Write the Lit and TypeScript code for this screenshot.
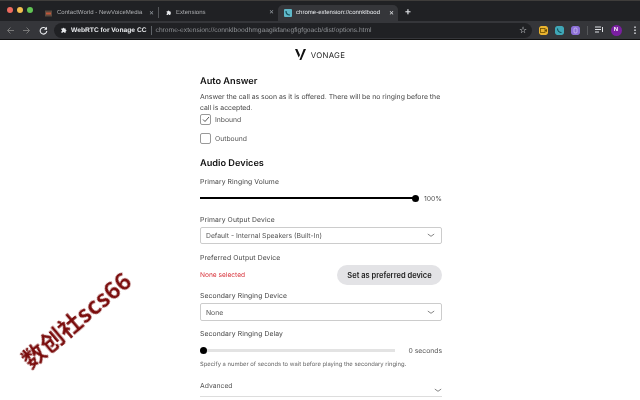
import { LitElement, html, css, svg } from "lit";
import { customElement } from "lit/decorators.js";

const puzzle = svg`<path d="M2 4h2.200a1.300 1.300 0 1 1 2.600 0H9v2.200a1.300 1.300 0 1 1 0 2.600V11H6.800a1.300 1.300 0 1 0-2.600 0H2V8.800a1.300 1.300 0 1 0 0-2.600z" fill="currentColor"/>`;
const chevron = html`<svg class="chev" viewBox="0 0 10 6" width="8" height="5"><path d="M1 1.200l4 2.800 4-2.800" fill="none" stroke="#666" stroke-width="1"/></svg>`;

@customElement("app-root")
export class AppRoot extends LitElement {
  static styles = css`
    :host { display: block; width: 640px; height: 400px; overflow: hidden; position: relative; background: #fff; font-family: Inter, "Noto Sans", sans-serif; color: #333; text-rendering: geometricPrecision; }
    * { box-sizing: border-box; }
    .chrome, .page { will-change: transform; }
    .chrome { font-family: "Liberation Sans", Arial, sans-serif; }
    .tabs { height: 21px; background: #202124; display: flex; align-items: flex-end; padding-left: 6px; border-top: 1px solid #3f3d3b; }
    .lights { display: flex; gap: 4px; width: 39px; height: 20px; align-items: center; padding-left: 1px; padding-bottom: 2px; }
    .lights i { width: 6px; height: 6px; border-radius: 50%; }
    .tab { height: 16px; display: flex; align-items: center; font-size: 6.050px; color: #a9abae; padding: 0 4px 0 6px; position: relative; white-space: nowrap; overflow: hidden; }
    .tab .label { flex: 1; overflow: hidden; min-width: 0; }
    .tab .x { font-size: 6px; color: #9aa0a6; margin-left: 3px; flex: none; }
    .t1 { width: 113px; padding-left: 0; }
    .t1 .ficon { margin-right: 5px; }
    .t2 { width: 120px; border-left: 1px solid #55575a; padding-left: 6px; height: 11px; margin-bottom: 3px; }
    .t3 { width: 120px; background: #35363a; color: #e8eaed; border-radius: 5px 5px 0 0; padding-left: 6px; }
    .ficon { width: 7px; height: 7px; margin-right: 4px; flex: none; }
    .plus { color: #dfe1e5; font-size: 10px; margin-left: 7px; height: 16px; line-height: 15px; font-weight: 600; }
    .bar { height: 19px; background: #35363a; display: flex; align-items: center; padding-left: 2px; color: #8d9094; border-bottom: 1px solid #111; }
    .nav { width: 16.500px; display: flex; justify-content: center; }
    .omni { margin-left: 2.500px; width: 478px; height: 15px; border-radius: 8px; background: #202124; display: flex; align-items: center; padding-left: 6px; font-size: 6.700px; white-space: nowrap; }
    .omni b { color: #e8eaed; font-weight: 700; margin-left: 4px; }
    .omni .sep { width: 1px; height: 9px; background: #5f6368; margin: 0 4px; }
    .omni .url { color: #8f9296; flex: 1; }
    .omni .star { color: #dfe1e5; font-size: 9px; margin-right: 5px; line-height: 1; }
    .exts { display: flex; align-items: center; margin-left: 6.500px; gap: 7px; }
    .ext { width: 9px; height: 9px; border-radius: 2px; flex: none; display: block; }
    .vsep { width: 1px; height: 9px; background: #55575a; }
    .avatar { width: 11px; height: 11px; border-radius: 50%; background: #7b1fa2; color: #fff; font-size: 6px; font-weight: 700; display: flex; align-items: center; justify-content: center; }
    .dots { color: #dfe1e5; font-size: 9px; font-weight: 700; margin-left: 2px; line-height: 1; }
    .logo { display: flex; justify-content: center; align-items: center; gap: 5px; height: 29px; font-size: 7.800px; letter-spacing: 0.300px; color: #222; }
    .col { width: 242px; margin-left: 200px; }
    h2 { margin: 0; font-size: 9.200px; font-weight: 600; color: #111; line-height: 14px; }
    .auto { margin-top: 6px; }
    .desc { font-size: 6.860px; line-height: 10.500px; margin-top: 3px; color: #444; }
    .check { display: flex; align-items: center; gap: 4px; font-size: 6.800px; color: #555; height: 11px; }
    .check .box { width: 11px; height: 11px; border: 1px solid #999; border-radius: 2px; display: flex; align-items: center; justify-content: center; }
    .c1 { margin-top: 1px; }
    .c2 { margin-top: 8px; }
    .audio { margin-top: 13px; }
    .lab { font-size: 6.800px; color: #444; line-height: 10px; letter-spacing: 0.100px; }
    .slider { display: flex; align-items: center; justify-content: space-between; height: 14px; font-size: 6.800px; color: #555; margin-top: 4px; }
    .track { height: 2px; position: relative; }
    .vol { width: 218px; background: #000; }
    .delay { width: 195px; background: #e3e3e3; height: 3px; }
    .knob { position: absolute; width: 7px; height: 7px; background: #000; border-radius: 50%; top: 50%; margin-top: -3.500px; }
    .kr { right: -1px; }
    .kl { left: 0; }
    .sel { border: 1px solid #ccc; border-radius: 2px; display: flex; align-items: center; justify-content: space-between; padding: 0 6px 0 5px; font-size: 6.800px; color: #555; margin-top: 2px; }
    .s1 { height: 17px; }
    .s2 { height: 18px; }
    .l0 { margin-top: 6px; }
    .l1 { margin-top: 10px; }
    .l2 { margin-top: 9px; }
    .l3 { margin-top: 6px; }
    .l4 { margin-top: 8px; }
    .pref { display: flex; align-items: center; justify-content: space-between; height: 20px; margin-top: 2px; }
    .none { font-size: 6.600px; color: #d9363e; }
    .btn { width: 105px; height: 20px; border-radius: 10px; background: #e3e3e6; border: 0; font: 600 7.500px Inter, sans-serif; color: #222; padding: 0; display: flex; align-items: center; justify-content: center; }
    .hint { font-size: 5.850px; color: #666; line-height: 8px; margin-top: 4px; }
    .adv { display: flex; justify-content: space-between; align-items: flex-end; height: 18px; border-bottom: 1px solid #ddd; margin-top: 10px; font-size: 6.800px; color: #555; padding-bottom: 6px; }
    .adv .chev { margin-bottom: -3px; }
    .mark { position: absolute; left: 9px; top: 308px; font-family: "Noto Sans CJK SC", sans-serif; font-size: 23.500px; font-weight: 700; color: #7a0c0c; transform: rotate(-40deg); white-space: nowrap; line-height: 1; }
  `;

  render() {
    return html`
      <div class="chrome">
      <div class="tabs">
        <div class="lights"><i style="background:#ed6a5e"></i><i style="background:#f4bf4f"></i><i style="background:#61c554"></i></div>
        <div class="tab t1"><svg class="ficon" viewBox="0 0 7 7"><rect width="7" height="6" y=".5" fill="#5a4a3f"/><rect x="1" y="2.500" width="5" height="2" fill="#c0563a"/></svg><span class="label">ContactWorld - NewVoiceMedia</span><span class="x">✕</span></div>
        <div class="tab t2"><svg class="ficon" viewBox="0 0 11 13" style="color:#e8eaed">${puzzle}</svg><span class="label">Extensions</span><span class="x">✕</span></div>
        <div class="tab t3"><svg class="ficon" style="width:8px;height:8px" viewBox="0 0 8 8"><rect width="8" height="8" rx="1" fill="#5fb8c9"/><path d="M2 2c0 2.500 1.500 4 4 4" stroke="#14505c" stroke-width="1.200" fill="none"/></svg><span class="label">chrome-extension://connklbood</span><span class="x" style="color:#e8eaed">✕</span></div>
        <div class="plus">+</div>
      </div>
      <div class="bar">
        <div class="nav"><svg width="9" height="9" viewBox="0 0 9 9"><path d="M8 4.500H1.500M4.500 1.500l-3 3 3 3" fill="none" stroke="#777" stroke-width="1"/></svg></div>
        <div class="nav"><svg width="9" height="9" viewBox="0 0 9 9"><path d="M1 4.500h6.500M4.500 1.500l3 3-3 3" fill="none" stroke="#777" stroke-width="1"/></svg></div>
        <div class="nav"><svg width="9" height="9" viewBox="0 0 9 9"><path d="M7.300 3A3.300 3.300 0 1 0 7.800 5" fill="none" stroke="#e8eaed" stroke-width="1.100"/><path d="M8 .8v3H5z" fill="#e8eaed"/></svg></div>
        <div class="omni">
          <svg width="7" height="8" viewBox="0 0 11 13" style="color:#e8eaed">${puzzle}</svg>
          <b>WebRTC for Vonage CC</b><span class="sep"></span>
          <span class="url">chrome-extension://connklboodhmgaagikfanegfigfgoacb/dist/options.html</span>
          <span class="star">☆</span>
        </div>
        <div class="exts">
          <svg class="ext" viewBox="0 0 9 9"><rect width="9" height="9" rx="2" fill="#e9b32f"/><rect x="1.500" y="2.500" width="4.500" height="4" fill="none" stroke="#6b4e00" stroke-width=".8"/><path d="M6 4l2-1v3L6 5z" fill="#6b4e00"/></svg>
          <svg class="ext" viewBox="0 0 9 9"><rect width="9" height="9" rx="2" fill="#3fa6b6"/><path d="M2.500 2.500c0 2.200 1.800 4 4 4" stroke="#0f4a55" stroke-width="1.100" fill="none"/></svg>
          <svg class="ext" viewBox="0 0 9 9"><rect width="9" height="9" rx="2" fill="#8b6fd6"/><rect x="3" y="2" width="3" height="5" rx="1" fill="none" stroke="#d9cdf7" stroke-width=".7"/></svg>
          <div class="vsep"></div>
          <svg width="9" height="8" viewBox="0 0 9 8"><path d="M0 1h6M0 3.500h6M0 6h4M7.500 1v5" stroke="#dfe1e5" stroke-width="1" fill="none"/></svg>
          <div class="avatar">N</div>
          <div class="dots">⋮</div>
        </div>
      </div>
      </div>
      <div class="page">
      <div class="logo">
        <svg width="11" height="11" viewBox="0 0 11 11"><path d="M0 0h2.300L5 6 3.700 8.500zM8.700 0H11L6.300 11H4.400z" fill="#111"/></svg>
        <span>VONAGE</span>
      </div>
      <div class="col">
        <h2 class="auto">Auto Answer</h2>
        <div class="desc">Answer the call as soon as it is offered. There will be no ringing before the call is accepted.</div>
        <div class="check c1"><span class="box"><svg width="8" height="7" viewBox="0 0 8 7"><path d="M1 3.500l2 2 4-4.500" fill="none" stroke="#444" stroke-width=".9"/></svg></span>Inbound</div>
        <div class="check c2"><span class="box"></span>Outbound</div>
        <h2 class="audio">Audio Devices</h2>
        <div class="lab l0">Primary Ringing Volume</div>
        <div class="slider">
          <div class="track vol"><div class="knob kr"></div></div><span>100%</span>
        </div>
        <div class="lab l1">Primary Output Device</div>
        <div class="sel s1"><span>Default - Internal Speakers (Built-In)</span>${chevron}</div>
        <div class="lab l2">Preferred Output Device</div>
        <div class="pref"><span class="none">None selected</span><button class="btn">Set as preferred device</button></div>
        <div class="lab l3">Secondary Ringing Device</div>
        <div class="sel s2"><span>None</span>${chevron}</div>
        <div class="lab l4">Secondary Ringing Delay</div>
        <div class="slider">
          <div class="track delay"><div class="knob kl"></div></div><span>0 seconds</span>
        </div>
        <div class="hint">Specify a number of seconds to wait before playing the secondary ringing.</div>
        <div class="adv"><span>Advanced</span>${chevron}</div>
      </div>
      </div>
      <div class="mark">数创社scs66</div>
    `;
  }
}
